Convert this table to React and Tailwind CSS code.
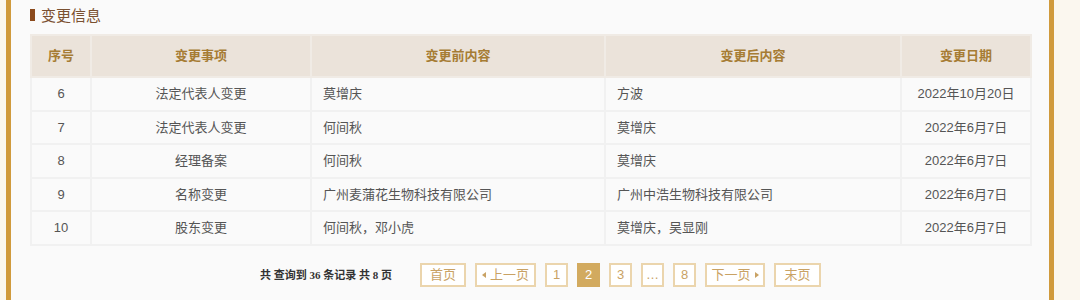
import React from 'react';

const rows = [
  ['6', '法定代表人变更', '莫增庆', '方波', '2022年10月20日'],
  ['7', '法定代表人变更', '何间秋', '莫增庆', '2022年6月7日'],
  ['8', '经理备案', '何间秋', '莫增庆', '2022年6月7日'],
  ['9', '名称变更', '广州麦蒲花生物科技有限公司', '广州中浩生物科技有限公司', '2022年6月7日'],
  ['10', '股东变更', '何间秋，邓小虎', '莫增庆，吴显刚', '2022年6月7日'],
];

const pageBtn =
  'shrink-0 h-[24px] flex items-center justify-center border-2 border-[#ebd5ad] text-[#c9a264] text-[13px] bg-white';

export default function App() {
  return (
    <div
      className="w-[1080px] h-[300px] bg-[#fbf7ef] overflow-hidden"
      style={{ fontFamily: '"Liberation Sans", "Noto Sans CJK SC", sans-serif' }}
    >
      <div className="ml-[6px] w-[1048px] h-full bg-[#fafafa] border-x-[5px] border-[#d09a3c] pl-[19px]">
        {/* 标题 */}
        <div className="flex items-center h-[29px] pt-[1px]">
          <span className="w-[5px] h-[12px] bg-[#8b4a1c] mr-[6px]" />
          <span className="text-[15px] text-[#7a5030] leading-none">变更信息</span>
        </div>

        {/* 表格 */}
        <table className="w-[1000px] border-collapse mt-[5px] text-[13px] table-fixed">
          <colgroup>
            <col className="w-[60px]" />
            <col className="w-[220px]" />
            <col className="w-[294px]" />
            <col className="w-[296px]" />
            <col className="w-[130px]" />
          </colgroup>
          <thead>
            <tr className="bg-[#ebe3da] h-[42px]">
              {['序号', '变更事项', '变更前内容', '变更后内容', '变更日期'].map((h) => (
                <th key={h} className="border-2 border-[#f0ebe5] text-[#a67c34] font-bold text-[13px]">
                  {h}
                </th>
              ))}
            </tr>
          </thead>
          <tbody>
            {rows.map((r) => (
              <tr key={r[0]} className="h-[33.6px] text-[#555]">
                <td className="border-2 border-[#f1f1f1] text-center">{r[0]}</td>
                <td className="border-2 border-[#f1f1f1] text-center">{r[1]}</td>
                <td className="border-2 border-[#f1f1f1] pl-[11px]">{r[2]}</td>
                <td className="border-2 border-[#f1f1f1] pl-[11px]">{r[3]}</td>
                <td className="border-2 border-[#f1f1f1] text-center">{r[4]}</td>
              </tr>
            ))}
          </tbody>
        </table>

        {/* 分页 */}
        <div className="flex items-center mt-[17px] pl-[230px]">
          <span
            className="w-[160px] shrink-0 text-[11px] font-bold text-[#333] whitespace-nowrap"
            style={{ fontFamily: '"Liberation Serif", "Noto Sans CJK SC", serif' }}
          >
            共 查询到 36 条记录 共 8 页
          </span>
          <div className="flex items-center gap-[9px]">
            <button className={`${pageBtn} w-[46px]`}>首页</button>
            <button className={`${pageBtn} w-[61px] gap-[4px]`}>
              <span className="w-0 h-0 border-y-[3px] border-y-transparent border-r-[4px] border-r-[#c9a264]" />
              上一页
            </button>
            <button className={`${pageBtn} w-[23px]`}>1</button>
            <button className="shrink-0 h-[24px] w-[23px] flex items-center justify-center bg-[#d2aa5f] text-white text-[13px]">2</button>
            <button className={`${pageBtn} w-[23px]`}>3</button>
            <button className={`${pageBtn} w-[23px]`}>…</button>
            <button className={`${pageBtn} w-[23px]`}>8</button>
            <button className={`${pageBtn} w-[60px] gap-[4px]`}>
              下一页
              <span className="w-0 h-0 border-y-[3px] border-y-transparent border-l-[4px] border-l-[#c9a264]" />
            </button>
            <button className={`${pageBtn} w-[47px]`}>末页</button>
          </div>
        </div>
      </div>
    </div>
  );
}
